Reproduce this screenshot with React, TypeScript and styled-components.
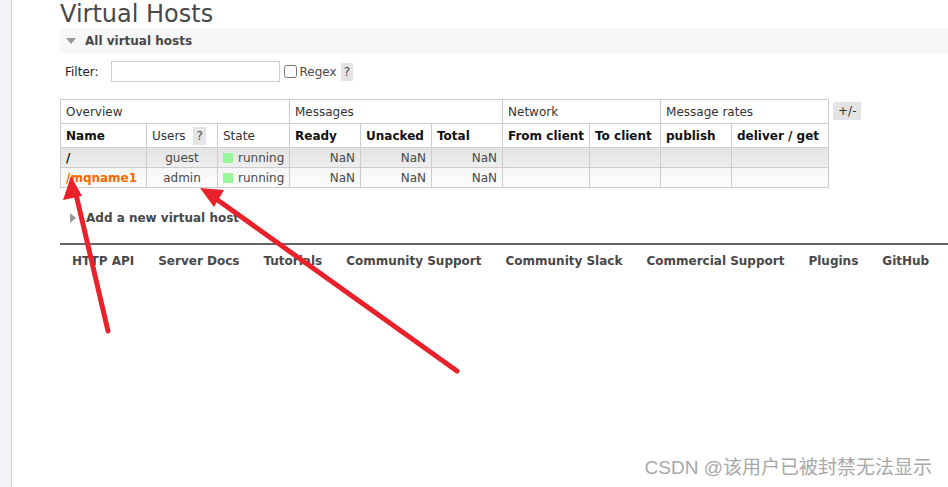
import React from "react";
import styled, { createGlobalStyle } from "styled-components";

const GlobalStyle = createGlobalStyle`
  html, body {
    margin: 0;
    padding: 0;
    background: #fff;
  }
  body {
    font-family: "DejaVu Sans", Verdana, sans-serif;
    font-size: 12px;
    color: #484848;
  }
`;

const Page = styled.div`
  position: relative;
  display: flex;
  width: 948px;
  height: 487px;
  overflow: hidden;
`;

const Sidebar = styled.div`
  width: 11px;
  flex: none;
  background: #f3f3f7;
  border-right: 1px solid #cfcfd6;
`;

const Main = styled.div`
  flex: 1;
  padding-left: 48px;
`;

const Title = styled.h1`
  margin: 0;
  font-size: 24px;
  font-weight: normal;
  line-height: 28px;
  color: #484848;
`;

const SectionBar = styled.div`
  display: flex;
  align-items: center;
  height: 25px;
  background: #f7f7f7;
  padding-left: 6px;
  gap: 9px;
  font-size: 12px;
  font-weight: bold;
  color: #484848;
`;

const TriangleDown = styled.span`
  width: 0;
  height: 0;
  border-left: 5px solid transparent;
  border-right: 5px solid transparent;
  border-top: 6px solid #999;
`;

const TriangleRight = styled.span`
  width: 0;
  height: 0;
  border-top: 5px solid transparent;
  border-bottom: 5px solid transparent;
  border-left: 6px solid #999;
`;

const FilterRow = styled.div`
  display: flex;
  align-items: center;
  margin-top: 8px;
  padding-left: 5px;
  height: 21px;
`;

const Label = styled.span`
  color: #222;
  margin-right: 12px;
`;

const FilterInput = styled.input`
  box-sizing: border-box;
  width: 169px;
  height: 21px;
  border: 1px solid #ccc;
  margin: 0 4px 0 0;
`;

const Check = styled.input`
  margin: 0 3px 0 0;
  width: 13px;
  height: 13px;
`;

const Help = styled.span`
  display: inline-block;
  background: #e4e4e4;
  padding: 1px 3px;
  margin-left: 4px;
  line-height: 16px;
  color: #484848;
`;

const TableWrap = styled.div`
  display: flex;
  align-items: flex-start;
  margin-top: 17px;
  gap: 4px;
`;

const Table = styled.table`
  border-collapse: collapse;
  table-layout: fixed;
  width: 769px;
  font-size: 12px;
`;

const GroupTh = styled.th`
  border: 1px solid #ccc;
  height: 23px;
  padding: 0 5px;
  text-align: left;
  font-weight: normal;
  color: #333;
`;

const ColTh = styled.th`
  border: 1px solid #ccc;
  height: 23px;
  padding: 0 5px;
  text-align: left;
  font-weight: bold;
  color: #111;
  white-space: nowrap;
`;

const ColThPlain = styled(ColTh)`
  font-weight: normal;
  color: #333;
`;

const Row = styled.tr<{ $alt?: boolean }>`
  background: ${(p) =>
    p.$alt
      ? "linear-gradient(#f6f6f6, #fdfdfd)"
      : "linear-gradient(#e4e4e4, #efefef)"};
`;

const Td = styled.td<{ $align?: string }>`
  border: 1px solid #ccc;
  height: 19px;
  padding: 0 5px;
  text-align: ${(p) => p.$align || "left"};
  color: #484848;
  white-space: nowrap;
`;

const VhostName = styled.span<{ $link?: boolean }>`
  font-weight: bold;
  color: ${(p) => (p.$link ? "#ff6600" : "#111")};
`;

const StateDot = styled.span`
  display: inline-block;
  width: 10px;
  height: 10px;
  background: #98f598;
  margin-right: 5px;
  vertical-align: -1px;
`;

const ToggleButton = styled.span`
  display: inline-block;
  margin-top: 3px;
  background: #e4e4e4;
  padding: 0 5px;
  line-height: 18px;
  color: #333;
`;

const AddRow = styled.div`
  display: flex;
  align-items: center;
  gap: 10px;
  margin-top: 23px;
  padding-left: 10px;
  font-size: 12px;
  font-weight: bold;
  color: #484848;
`;

const Footer = styled.div`
  margin-top: 18px;
  border-top: 2px solid #666;
  display: flex;
  padding-top: 9px;
`;

const FooterLink = styled.span`
  padding: 0 12px;
  font-size: 12px;
  font-weight: bold;
  color: #484848;
  white-space: nowrap;
`;

const Overlay = styled.svg`
  position: absolute;
  left: 0;
  top: 0;
  pointer-events: none;
`;

const Watermark = styled.div`
  position: absolute;
  right: 16px;
  bottom: 8px;
  font-family: "Liberation Sans", "Noto Sans CJK SC", sans-serif;
  font-size: 19px;
  color: #a8a8a8;
`;

const rows = [
  { name: "/", user: "guest", link: false },
  { name: "/mqname1", user: "admin", link: true },
];

const links = [
  "HTTP API",
  "Server Docs",
  "Tutorials",
  "Community Support",
  "Community Slack",
  "Commercial Support",
  "Plugins",
  "GitHub",
];

const widths = [86, 71, 72, 71, 71, 71, 87, 71, 71, 97];

export default function App() {
  return (
    <>
      <GlobalStyle />
      <Page>
        <Sidebar />
        <Main>
          <Title>Virtual Hosts</Title>
          <SectionBar>
            <TriangleDown />
            All virtual hosts
          </SectionBar>
          <FilterRow>
            <Label>Filter:</Label>
            <FilterInput type="text" />
            <Check type="checkbox" />
            <span>Regex</span>
            <Help>?</Help>
          </FilterRow>
          <TableWrap>
            <Table>
              <colgroup>
                {widths.map((w, i) => (
                  <col key={i} style={{ width: w }} />
                ))}
              </colgroup>
              <thead>
                <tr>
                  <GroupTh colSpan={3}>Overview</GroupTh>
                  <GroupTh colSpan={3}>Messages</GroupTh>
                  <GroupTh colSpan={2}>Network</GroupTh>
                  <GroupTh colSpan={2}>Message rates</GroupTh>
                </tr>
                <tr>
                  <ColTh>Name</ColTh>
                  <ColThPlain>
                    Users <Help>?</Help>
                  </ColThPlain>
                  <ColThPlain>State</ColThPlain>
                  <ColTh>Ready</ColTh>
                  <ColTh>Unacked</ColTh>
                  <ColTh>Total</ColTh>
                  <ColTh>From client</ColTh>
                  <ColTh>To client</ColTh>
                  <ColTh>publish</ColTh>
                  <ColTh>deliver / get</ColTh>
                </tr>
              </thead>
              <tbody>
                {rows.map((r, i) => (
                  <Row key={r.name} $alt={i === 1}>
                    <Td>
                      <VhostName $link={r.link}>{r.name}</VhostName>
                    </Td>
                    <Td $align="center">{r.user}</Td>
                    <Td>
                      <StateDot />
                      running
                    </Td>
                    <Td $align="right">NaN</Td>
                    <Td $align="right">NaN</Td>
                    <Td $align="right">NaN</Td>
                    <Td />
                    <Td />
                    <Td />
                    <Td />
                  </Row>
                ))}
              </tbody>
            </Table>
            <ToggleButton>+/-</ToggleButton>
          </TableWrap>
          <AddRow>
            <TriangleRight />
            Add a new virtual host
          </AddRow>
          <Footer>
            {links.map((l) => (
              <FooterLink key={l}>{l}</FooterLink>
            ))}
          </Footer>
        </Main>
        <Overlay width="948" height="487" viewBox="0 0 948 487">
          <g stroke="#e8212b" strokeWidth="5" strokeLinecap="round" fill="none">
            <line x1="108" y1="331" x2="75" y2="190" />
            <line x1="457" y1="371" x2="212" y2="196" />
          </g>
          <g fill="#e8212b">
            <polygon points="71,176 63,200 82,196" />
            <polygon points="200,188 214,207 224,190" />
          </g>
        </Overlay>
        <Watermark>CSDN @该用户已被封禁无法显示</Watermark>
      </Page>
    </>
  );
}
